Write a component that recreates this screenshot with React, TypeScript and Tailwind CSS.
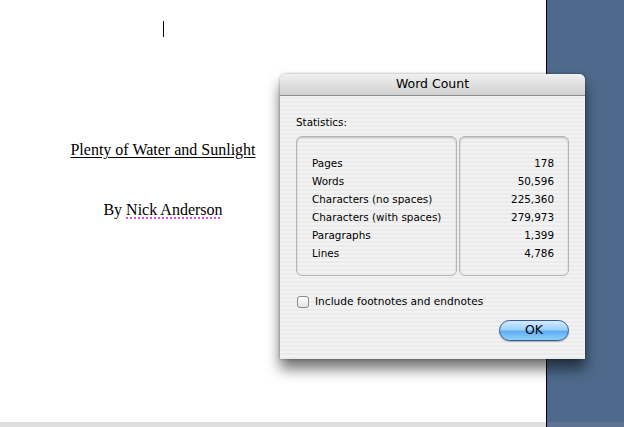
const stats = [
  { label: "Pages", value: "178" },
  { label: "Words", value: "50,596" },
  { label: "Characters (no spaces)", value: "225,360" },
  { label: "Characters (with spaces)", value: "279,973" },
  { label: "Paragraphs", value: "1,399" },
  { label: "Lines", value: "4,786" },
];

function WordCountDialog() {
  return (
    <div className="absolute left-[280px] top-[74px] w-[305px] h-[285px] rounded-t-[6px] bg-[repeating-linear-gradient(0deg,#ebebeb_0px,#ebebeb_2px,#f3f3f3_2px,#f3f3f3_4px)] shadow-[0_10px_14px_rgba(0,0,0,0.55),0_0_3px_rgba(0,0,0,0.35)] font-['DejaVu_Sans',sans-serif] text-black">
      <div className="h-[22px] rounded-t-[6px] border-b border-[#8e8e8e] bg-[linear-gradient(#f0f0f0,#d0d0d0)] flex items-center justify-center text-[12.5px] leading-none">
        Word Count
      </div>
      <div className="px-4 pt-[19px] pb-[18px]">
        <div className="text-[10.4px] leading-[14px]">Statistics:</div>
        <div className="mt-[7px] flex gap-[2px] h-[140px]">
          <div className="w-[161px] rounded-[6px] border border-[#b4b4b4] shadow-[inset_0_1px_2px_rgba(0,0,0,0.18)] pt-[17px] pl-[15px]">
            {stats.map((s) => (
              <div key={s.label} className="text-[10.4px] leading-[18px]">
                {s.label}
              </div>
            ))}
          </div>
          <div className="flex-1 rounded-[6px] border border-[#b4b4b4] shadow-[inset_0_1px_2px_rgba(0,0,0,0.18)] pt-[17px] pr-[14px] text-right">
            {stats.map((s) => (
              <div key={s.label} className="text-[10.4px] leading-[18px]">
                {s.value}
              </div>
            ))}
          </div>
        </div>
        <div className="mt-[19px] flex items-center h-[13px]">
          <div className="ml-px w-[12px] h-[12px] rounded-[3px] border border-[#8a8a8a] bg-[linear-gradient(#ffffff,#e4e4e4)]" />
          <span className="ml-[6px] text-[10.6px] leading-none">Include footnotes and endnotes</span>
        </div>
        <div className="mt-[12px] flex justify-end">
          <button className="w-[70px] h-[21px] rounded-full border border-[#33579a] bg-[linear-gradient(#d3ebff_0%,#9fd0fb_45%,#5eaef4_55%,#8fd0fb_100%)] shadow-[0_1px_1px_rgba(0,0,0,0.25)] text-[12.5px] leading-none">
            OK
          </button>
        </div>
      </div>
    </div>
  );
}

export default function App() {
  return (
    <div className="relative w-[624px] h-[427px] overflow-hidden flex flex-col">
      <div className="flex flex-1">
        <div className="w-[547px] bg-white border-r border-black">
          <div className="w-[326px] flex flex-col items-center font-['Liberation_Serif',serif] text-[16px] text-black">
            <div className="mt-[21px] w-px h-[16px] bg-black" />
            <div className="mt-[103px] leading-[20px] underline underline-offset-[2px]">
              Plenty of Water and Sunlight
            </div>
            <div className="mt-[40px] leading-[20px]">
              By{" "}
              <span className="underline decoration-dotted decoration-[#e020e0] underline-offset-[3px]">
                Nick Anderson
              </span>
            </div>
          </div>
        </div>
        <div className="flex-1 bg-[#4d6a8c]" />
      </div>
      <div className="h-[5px] flex">
        <div className="w-[546px] bg-[#dedede]" />
        <div className="w-px bg-black" />
        <div className="flex-1 bg-[#5d7391]" />
      </div>
      <WordCountDialog />
    </div>
  );
}
